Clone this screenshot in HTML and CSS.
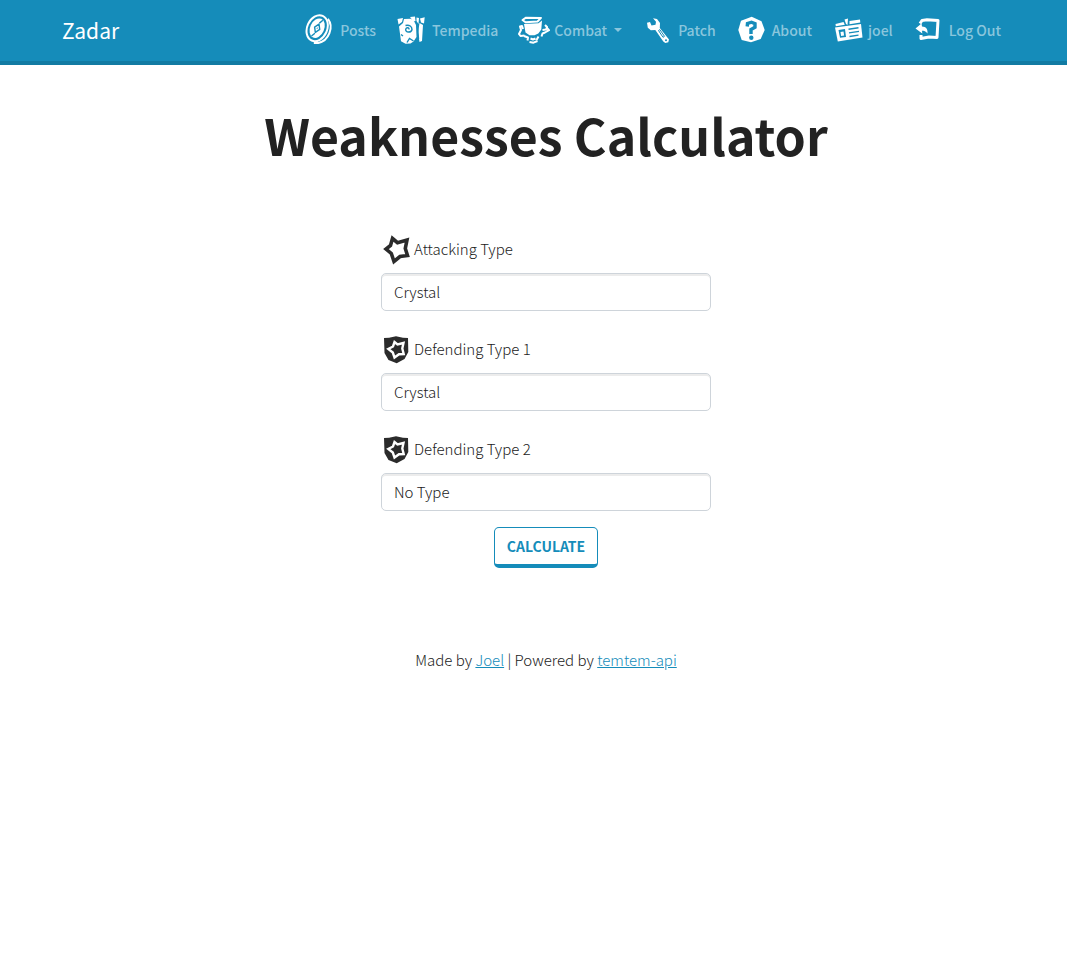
FILE: index.html
```html
<!DOCTYPE html>
<html lang="en">
<head>
<meta charset="utf-8">
<meta name="viewport" content="width=device-width, initial-scale=1">
<title>Zadar - Weaknesses Calculator</title>
<link rel="stylesheet" href="styles.css">
</head>
<body>
<nav class="navbar">
  <a class="brand" href="#">Zadar</a>
  <ul class="nav">
    <li><a class="nav-link" href="#">
      <svg class="icon" viewBox="0 0 32 32" aria-hidden="true">
        <g class="line" transform="rotate(24 15 15)">
          <ellipse cx="13" cy="15" rx="10" ry="13.500"/>
          <ellipse class="solid" cx="13" cy="15" rx="7" ry="10.200" stroke="none"/>
          <path class="cut-line" d="M13 10.500l2.800 4.500-2.800 4.500-2.800-4.500zM15 5.500l-2 4M11 24.500l2-4"/>
          <path class="cut" d="M13 14l.7 1-.7 1-.7-1z" stroke="none"/>
          <path d="M19 2c9 5 10 20 1 26l-4 2"/>
        </g>
      </svg>Posts</a></li>
    <li><a class="nav-link" href="#">
      <svg class="icon" viewBox="0 0 32 32" aria-hidden="true">
        <path class="solid" d="M1.500 5l5.500-1-1 4-3.500 2.500zM8 5l7-.3 3.500 3.300 1.500 3 .5 12-3 4.500-3 2-5 .3-4.500-2.500L3 12.500l4-3.500zM14 3l5-.5.5 4.500-2 .5zM20.500 3.500l2.500.5-.5 6-2-3zM24 4.500l4.700-1.300-.7 6.300-3-1zM23.500 9l3.500 2-1 16-2.500 1-1.500-9z"/>
        <path class="cut-line" d="M13 15.500c.3-2-2.500-2.500-3.300-.3-.6 3.500 5.600 4 6.300.3 0-3-2.500-5-6.500-4M11 28.500l2.500-4 4 2.500M5 20.500l2 1.500M21.500 12l1 13"/>
      </svg>Tempedia</a></li>
    <li><a class="nav-link" href="#">
      <svg class="icon" viewBox="0 0 32 32" aria-hidden="true">
        <path class="line" d="M4.500 6l3.500-2.300 15 .2-3.500 3.600-12 .7z"/>
        <path class="solid" d="M6 10l14.500-.8 3.500-2.700-.7 9-3 4-3.800 1.800h-5L7.500 18.500z"/>
        <path class="line" d="M5 15l-1-3-2 .5 1 3.500-2 4 1.500 2 4-.5M24.500 16l3.500-.5 1-2.500-2-2M29 14l2 2.200-4 2.300-2.500 1-1 3"/>
        <path class="line" d="M6 22l4 1.500-.5 3M20.500 22.500l-2 3.500M12.500 24.500l2.500 1 2.500-1M11.500 28l4 .7 4-1.700"/>
      </svg>Combat<span class="caret"></span></a></li>
    <li><a class="nav-link" href="#">
      <svg class="icon" viewBox="0 0 32 32" aria-hidden="true">
        <path class="solid" d="M11 4.300l4 .7 3 4-.2 5L27 25.500l-.7 2.700-3 .8-2-1.500-8-11.500-4.500.3-3-2.500-.8-5L8 8l1.500 3.500 4-.7.5-3z"/>
        <path class="cut-line thin" d="M16.500 16.500l1.300-.9 4.700 6.700-1.500 1z"/><circle class="cut" cx="24" cy="26.300" r="1"/>
      </svg>Patch</a></li>
    <li><a class="nav-link" href="#">
      <svg class="icon" viewBox="0 0 32 32" aria-hidden="true">
        <path class="solid" d="M15.700 2.700l9.800 4.500 3.200 8.800-4 9-9.700 3.300-9.300-2.300L2.300 16 5 6.700z"/>
        <path class="cut-line heavy" d="M11.200 12.500l.3-3 4-1.300 3.500 1.500v3.500L15 15.500V20"/>
        <circle class="cut" cx="15.300" cy="23.800" r="2.200"/>
      </svg>About</a></li>
    <li><a class="nav-link" href="#">
      <svg class="icon" viewBox="0 0 32 32" aria-hidden="true">
        <path class="solid" d="M3.500 10l8-2 1.300 2.700-9 1.500zM12.500 5.500l3.500-1-.5 6.500-1.500-1zM17.500 7l10.500-1.500.3 3-10.800 1.700z"/>
        <path class="solid" d="M3 13.500l26-3.500 1.500 13.500-24.700 4z"/>
        <path class="cut" d="M6.500 16l6.500-1 1 8-6 .8z"/>
        <path class="solid" d="M8.500 18l3-.5.6 4-3 .5z"/>
        <path class="cut-line" d="M16.500 15.200l10-1.500M17 18.900l10-1.500M17.500 22.500l9-1.400"/>
      </svg>joel</a></li>
    <li><a class="nav-link" href="#">
      <svg class="icon" viewBox="0 0 32 32" aria-hidden="true">
        <path class="line strong" d="M7 9.500L9 6.500l5-.7 11 .7-1 17-8-.5-8 1.500V21"/>
        <path class="solid" d="M2.500 14.500l6-5 .5 3c4 .2 5.800 2 5.500 7-2-2.600-3.500-3.200-5.500-2.700l.3 2.700z"/>
      </svg>Log Out</a></li>
  </ul>
</nav>

<main class="page">
  <h1 class="title">Weaknesses Calculator</h1>
  <form class="calculator">
    <div class="field">
      <label class="label" for="attacking">
        <svg class="icon" viewBox="0 0 32 32" aria-hidden="true">
          <path class="star" d="M11.500 5.500l5 4.200 9.500-2.700-1.700 8.500 2.200 7-7.500 1-6 5-2.700-8-5.300-4.500L9.500 12.500z"/>
        </svg>Attacking Type</label>
      <select class="select" id="attacking"><option>Crystal</option></select>
    </div>
    <div class="field">
      <label class="label" for="defending-1">
        <svg class="icon" viewBox="0 0 32 32" aria-hidden="true">
          <path class="shield" d="M3 5l5-.2L15 3.300l7 1.500 5 .2.300 14-3.800 7-7.800 4.300L7.500 27 3.500 20z"/>
          <path class="shield-star" d="M13.500 9l3 2.500 6-1.500-1.200 5.500 1.400 5.500-4.700.2-4.500 3.300-1.700-5-4.500-3.500 4.700-2.500z"/>
        </svg>Defending Type 1</label>
      <select class="select" id="defending-1"><option>Crystal</option></select>
    </div>
    <div class="field">
      <label class="label" for="defending-2">
        <svg class="icon" viewBox="0 0 32 32" aria-hidden="true">
          <path class="shield" d="M3 5l5-.2L15 3.300l7 1.500 5 .2.300 14-3.800 7-7.800 4.300L7.500 27 3.500 20z"/>
          <path class="shield-star" d="M13.500 9l3 2.500 6-1.500-1.200 5.500 1.400 5.500-4.700.2-4.500 3.300-1.700-5-4.500-3.500 4.700-2.500z"/>
        </svg>Defending Type 2</label>
      <select class="select" id="defending-2"><option>No Type</option></select>
    </div>
    <button class="button" type="button">CALCULATE</button>
  </form>
  <footer class="footer">Made by <a href="#">Joel</a> | Powered by <a href="#">temtem-api</a></footer>
</main>
</body>
</html>
```
FILE: styles.css
```css
* { box-sizing: border-box; }

body {
  margin: 0;
  background: #fff;
  color: #222;
  font-family: "Source Sans Pro", "Noto Sans CJK SC", sans-serif;
  font-size: 15px;
  font-weight: 300;
  line-height: 24px;
}

.navbar {
  display: flex;
  align-items: center;
  justify-content: space-between;
  padding: 9px 66px 11px 62px;
  background: #158cba;
  border-bottom: 4px solid #127ba3;
}

.brand {
  color: #fff;
  font-size: 21px;
  font-weight: 400;
  line-height: 30px;
  text-decoration: none;
}

.nav {
  display: flex;
  gap: 20px;
  margin: 0;
  padding: 0;
  list-style: none;
}

.nav-link {
  display: flex;
  align-items: center;
  gap: 4px;
  height: 41px;
  color: #8ac6dd;
  font-size: 14px;
  font-weight: 500;
  text-decoration: none;
  white-space: nowrap;
}

.icon {
  flex: none;
  width: 32px;
  height: 32px;
}

.solid { fill: #fff; }
.line { fill: none; stroke: #fff; stroke-width: 2; stroke-linejoin: round; }
.strong { stroke-width: 3; }
.cut { fill: #158cba; }
.cut-line { fill: none; stroke: #158cba; stroke-width: 1.4; }
.thin { stroke-width: 1; }
.heavy { stroke-width: 3.4; }
.star { fill: none; stroke: #2b2b2b; stroke-width: 3.6; }
.shield { fill: #2b2b2b; }
.shield-star { fill: none; stroke: #fff; stroke-width: 2.4; }

.caret {
  margin-left: 3px;
  border: 4px solid transparent;
  border-top-color: #8ac6dd;
  border-bottom: 0;
}

.page {
  display: flex;
  flex-direction: column;
  align-items: center;
  padding: 40px 0 40px 25px;
}

.title {
  margin: 0;
  font-size: 50px;
  line-height: 58px;
  font-weight: 700;
}

.calculator {
  display: flex;
  flex-direction: column;
  align-items: center;
  width: 100%;
  max-width: 330px;
  margin-top: 70px;
}

.field {
  width: 100%;
  margin-bottom: 16px;
}

.field + .field { margin-top: 6px; }

.label {
  display: flex;
  align-items: center;
  gap: 1px;
  margin-bottom: 8px;
}

.select {
  display: block;
  width: 100%;
  height: 38px;
  padding: 0 12px;
  appearance: none;
  border: 1px solid #ced4da;
  border-radius: 5px;
  background: #fff;
  box-shadow: inset 0 2px 0 rgba(0, 0, 0, 0.075);
  color: #222;
  font: inherit;
}

.button {
  padding: 8px 12px 7px;
  border: 1px solid #158cba;
  border-bottom-width: 4px;
  border-radius: 5px;
  background: #fff;
  color: #158cba;
  font: inherit;
  font-size: 14px;
  line-height: 21px;
  font-weight: 700;
}

.footer { margin-top: 80px; }
.footer a { color: #158cba; }
```
